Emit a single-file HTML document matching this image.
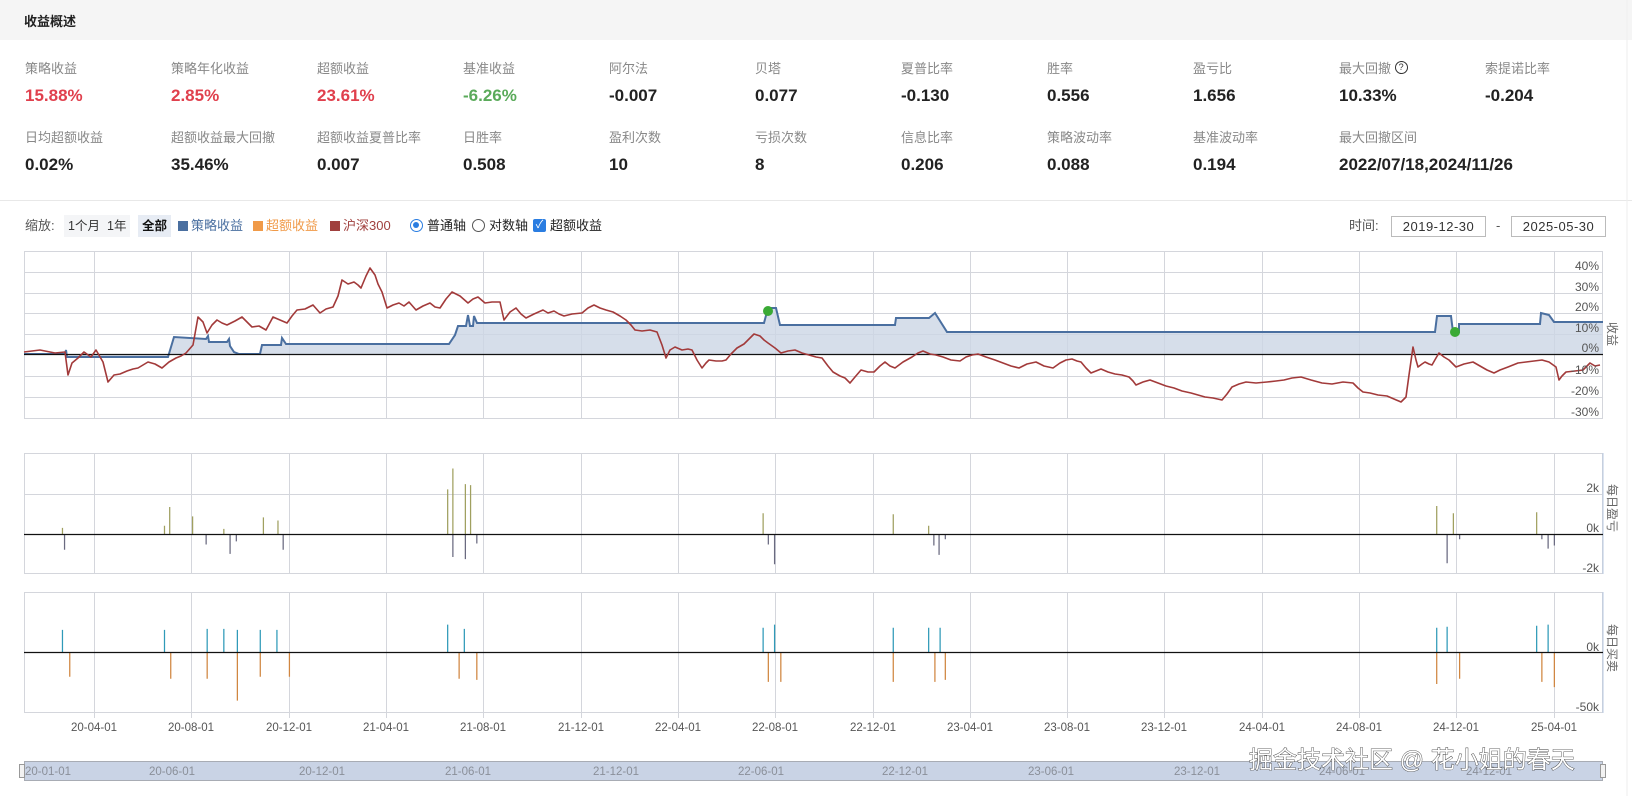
<!DOCTYPE html>
<html><head><meta charset="utf-8">
<style>
*{margin:0;padding:0;box-sizing:border-box}
body{width:1632px;height:796px;background:#fff;font-family:"Liberation Sans","Noto Sans CJK SC",sans-serif;position:relative;overflow:hidden;color:#222}
.hdr{position:absolute;left:0;top:0;width:1632px;height:40px;background:#f5f5f5}
.hdr span{position:absolute;left:24px;top:11px;font-size:13px;font-weight:bold;color:#222}
.st{position:absolute;width:146px}
.st .l{font-size:13px;color:#888;line-height:16px;height:16px;white-space:nowrap}
.st .v{font-size:17px;font-weight:bold;color:#222;line-height:20px;margin-top:9px}
.red{color:#e0404d!important}.grn{color:#5aaa5a!important}
.sep{position:absolute;left:0;top:200px;width:1632px;height:1px;background:#e8e8e8}
.tb{position:absolute;top:217px;font-size:13px;line-height:18px;color:#555}
.btn{position:absolute;top:215px;height:22px;line-height:22px;font-size:12.5px;padding:0 4px;background:#f4f5f7;color:#333}
.sq{position:absolute;top:221px;width:10px;height:10px}
.dbox{position:absolute;top:216px;width:95px;height:21px;border:1px solid #bbb;font-size:13px;line-height:19px;text-align:center;color:#333;letter-spacing:0.5px}
svg{position:absolute;left:0;top:0}
</style></head><body>
<div class="hdr"><span>收益概述</span></div>

<div class="st" style="left:25px;top:61px"><div class="l">策略收益</div><div class="v red">15.88%</div></div>
<div class="st" style="left:171px;top:61px"><div class="l">策略年化收益</div><div class="v red">2.85%</div></div>
<div class="st" style="left:317px;top:61px"><div class="l">超额收益</div><div class="v red">23.61%</div></div>
<div class="st" style="left:463px;top:61px"><div class="l">基准收益</div><div class="v grn">-6.26%</div></div>
<div class="st" style="left:609px;top:61px"><div class="l">阿尔法</div><div class="v">-0.007</div></div>
<div class="st" style="left:755px;top:61px"><div class="l">贝塔</div><div class="v">0.077</div></div>
<div class="st" style="left:901px;top:61px"><div class="l">夏普比率</div><div class="v">-0.130</div></div>
<div class="st" style="left:1047px;top:61px"><div class="l">胜率</div><div class="v">0.556</div></div>
<div class="st" style="left:1193px;top:61px"><div class="l">盈亏比</div><div class="v">1.656</div></div>
<div class="st" style="left:1339px;top:61px"><div class="l">最大回撤 <span style="display:inline-block;width:13px;height:13px;border:1.3px solid #333;border-radius:50%;font-size:9px;line-height:10px;text-align:center;color:#333;vertical-align:top">?</span></div><div class="v">10.33%</div></div>
<div class="st" style="left:1485px;top:61px"><div class="l">索提诺比率</div><div class="v">-0.204</div></div>

<div class="st" style="left:25px;top:130px"><div class="l">日均超额收益</div><div class="v">0.02%</div></div>
<div class="st" style="left:171px;top:130px"><div class="l">超额收益最大回撤</div><div class="v">35.46%</div></div>
<div class="st" style="left:317px;top:130px"><div class="l">超额收益夏普比率</div><div class="v">0.007</div></div>
<div class="st" style="left:463px;top:130px"><div class="l">日胜率</div><div class="v">0.508</div></div>
<div class="st" style="left:609px;top:130px"><div class="l">盈利次数</div><div class="v">10</div></div>
<div class="st" style="left:755px;top:130px"><div class="l">亏损次数</div><div class="v">8</div></div>
<div class="st" style="left:901px;top:130px"><div class="l">信息比率</div><div class="v">0.206</div></div>
<div class="st" style="left:1047px;top:130px"><div class="l">策略波动率</div><div class="v">0.088</div></div>
<div class="st" style="left:1193px;top:130px"><div class="l">基准波动率</div><div class="v">0.194</div></div>
<div class="st" style="left:1339px;top:130px;width:260px"><div class="l">最大回撤区间</div><div class="v">2022/07/18,2024/11/26</div></div>

<div class="sep"></div>

<div class="tb" style="left:25px">缩放:</div>
<div class="btn" style="left:64px">1个月</div>
<div class="btn" style="left:103px">1年</div>
<div class="btn" style="left:138px;background:#e7ecf4;color:#111;font-weight:bold">全部</div>
<div class="sq" style="left:178px;background:#4a6fa0"></div><div class="tb" style="left:191px;color:#4a6fa0">策略收益</div>
<div class="sq" style="left:253px;background:#f09a48"></div><div class="tb" style="left:266px;color:#f09a48">超额收益</div>
<div class="sq" style="left:330px;background:#a0403e"></div><div class="tb" style="left:343px;color:#a0403e">沪深300</div>
<div style="position:absolute;left:410px;top:219px;width:13px;height:13px;border:1.5px solid #2a7de1;border-radius:50%"><div style="margin:2px;width:6px;height:6px;border-radius:50%;background:#2a7de1"></div></div>
<div class="tb" style="left:427px;color:#222">普通轴</div>
<div style="position:absolute;left:472px;top:219px;width:13px;height:13px;border:1px solid #555;border-radius:50%"></div>
<div class="tb" style="left:489px;color:#222">对数轴</div>
<div style="position:absolute;left:533px;top:219px;width:13px;height:13px;background:#2a7de1;border-radius:2px;color:#fff;font-size:11px;line-height:13px;text-align:center">✓</div>
<div class="tb" style="left:550px;color:#222">超额收益</div>

<div class="tb" style="left:1349px;color:#555">时间:</div>
<div class="dbox" style="left:1391px">2019-12-30</div>
<div class="tb" style="left:1496px">-</div>
<div class="dbox" style="left:1511px">2025-05-30</div>

<svg width="1632" height="796" viewBox="0 0 1632 796" font-family="Liberation Sans, Noto Sans CJK SC, sans-serif">
<line x1="1627" y1="0" x2="1627" y2="796" stroke="#eee"/>
<g stroke="#d4d6dc" stroke-width="1" fill="none">
 <rect x="24.5" y="251.5" width="1578" height="167"/>
 <line x1="24" y1="272.5" x2="1603" y2="272.5"/><line x1="24" y1="293.5" x2="1603" y2="293.5"/>
 <line x1="24" y1="313.5" x2="1603" y2="313.5"/><line x1="24" y1="334.5" x2="1603" y2="334.5"/>
 <line x1="24" y1="376.5" x2="1603" y2="376.5"/><line x1="24" y1="397.5" x2="1603" y2="397.5"/>
 <rect x="24.5" y="453.5" width="1578" height="120"/>
 <line x1="24" y1="494.5" x2="1603" y2="494.5"/>
 <rect x="24.5" y="592.5" width="1578" height="120"/>
 <path d="M94.5 251V418M191.5 251V418M289.5 251V418M386.5 251V418M483.5 251V418M581.5 251V418M678.5 251V418M775.5 251V418M873.5 251V418M970.5 251V418M1067.5 251V418M1164.5 251V418M1262.5 251V418M1359.5 251V418M1456.5 251V418M1554.5 251V418"/>
 <path d="M94.5 453V574M191.5 453V574M289.5 453V574M386.5 453V574M483.5 453V574M581.5 453V574M678.5 453V574M775.5 453V574M873.5 453V574M970.5 453V574M1067.5 453V574M1164.5 453V574M1262.5 453V574M1359.5 453V574M1456.5 453V574M1554.5 453V574"/>
 <path d="M94.5 592V718M191.5 592V718M289.5 592V718M386.5 592V718M483.5 592V718M581.5 592V718M678.5 592V718M775.5 592V718M873.5 592V718M970.5 592V718M1067.5 592V718M1164.5 592V718M1262.5 592V718M1359.5 592V718M1456.5 592V718M1554.5 592V718"/>
</g>
<line x1="1603" y1="453" x2="1603" y2="574" stroke="#b8c8e0"/>
<line x1="1603" y1="592" x2="1603" y2="713" stroke="#b8c8e0"/>
<path d="M24 354 L65 354 L66 350 L67 357 L168 357 L174 337 L206 339 L208 336 L209 342 L227 342 L229 339 L230 346 L234 352 L239 354 L260 354 L262 345 L281 345 L282 338 L286 344 L449 344 L455 335 L458 326 L466 326 L468 315 L470 326 L473 326 L474 316 L477 323 L764 323 L768 308 L776 308 L780 325 L895 325 L896 318 L929 318 L935 313 L947 332 L1435 332 L1437 316 L1451 316 L1453 332 L1459 332 L1459 324 L1540 324 L1541 313 L1549 315 L1554 322 L1603 322 L1603 354 Z" fill="#ccd6e5" fill-opacity="0.8"/>
<path d="M24 354 L65 354 L66 350 L67 357 L168 357 L174 337 L206 339 L208 336 L209 342 L227 342 L229 339 L230 346 L234 352 L239 354 L260 354 L262 345 L281 345 L282 338 L286 344 L449 344 L455 335 L458 326 L466 326 L468 315 L470 326 L473 326 L474 316 L477 323 L764 323 L768 308 L776 308 L780 325 L895 325 L896 318 L929 318 L935 313 L947 332 L1435 332 L1437 316 L1451 316 L1453 332 L1459 332 L1459 324 L1540 324 L1541 313 L1549 315 L1554 322 L1603 322" fill="none" stroke="#4a6fa0" stroke-width="2"/>
<line x1="24" y1="354.5" x2="1603" y2="354.5" stroke="#111" stroke-width="1.3"/>
<path d="M24 352 L40 350 L55 353 L65 352 L68 375 L72 363 L78 358 L84 352 L91 357 L96 350 L103 362 L108 382 L114 375 L120 374 L127 371 L133 369 L138 368 L143 365 L148 362 L155 364 L162 368 L169 362 L176 358 L181 356 L186 353 L193 345 L198 317 L201 320 L203 322 L207 333 L212 325 L217 320 L222 323 L227 325 L235 321 L242 317 L247 322 L252 327 L259 326 L266 330 L273 317 L280 320 L287 323 L292 316 L297 310 L305 309 L313 305 L320 313 L326 309 L333 307 L338 296 L342 280 L348 284 L354 282 L358 285 L361 288 L366 276 L370 268 L375 275 L378 284 L382 292 L387 308 L393 305 L399 303 L404 306 L409 302 L416 310 L423 306 L430 303 L435 307 L440 308 L446 299 L452 292 L460 296 L468 303 L473 299 L478 297 L485 303 L492 302 L500 302 L504 320 L510 312 L516 308 L521 314 L526 318 L534 314 L543 310 L548 313 L554 311 L559 314 L564 316 L572 314 L582 313 L588 308 L594 305 L600 308 L606 310 L613 312 L620 316 L626 320 L631 325 L635 330 L642 331 L650 330 L657 332 L662 345 L666 358 L670 350 L675 347 L682 350 L688 349 L692 350 L697 360 L702 368 L706 363 L709 360 L716 361 L722 361 L726 360 L731 354 L737 348 L744 344 L750 338 L754 334 L760 336 L764 340 L768 343 L775 348 L781 353 L788 351 L795 350 L802 353 L809 355 L816 357 L822 358 L828 366 L833 372 L840 376 L845 378 L850 383 L855 377 L861 370 L868 372 L874 372 L880 366 L885 362 L890 366 L895 368 L903 362 L912 357 L918 353 L923 351 L930 354 L936 355 L943 357 L951 360 L960 361 L966 357 L972 355 L978 354 L986 357 L995 360 L1003 363 L1011 366 L1019 368 L1027 364 L1036 362 L1044 366 L1053 368 L1060 363 L1066 360 L1072 359 L1077 361 L1081 362 L1086 368 L1091 373 L1096 371 L1101 369 L1108 372 L1115 374 L1122 375 L1129 377 L1133 381 L1136 385 L1143 382 L1150 380 L1158 383 L1166 386 L1174 388 L1182 391 L1191 393 L1198 395 L1205 397 L1213 398 L1222 400 L1227 394 L1232 387 L1239 384 L1246 382 L1256 383 L1267 382 L1276 381 L1284 380 L1292 378 L1301 377 L1311 380 L1322 383 L1332 384 L1343 382 L1353 383 L1358 388 L1363 392 L1370 393 L1378 395 L1387 396 L1394 399 L1401 402 L1406 397 L1409 375 L1413 347 L1416 360 L1418 367 L1422 364 L1425 362 L1429 364 L1432 365 L1436 358 L1439 353 L1444 357 L1449 360 L1453 364 L1456 367 L1464 364 L1473 362 L1480 366 L1487 370 L1494 373 L1500 370 L1508 367 L1518 363 L1526 362 L1534 361 L1542 360 L1549 362 L1556 367 L1559 380 L1562 376 L1566 372 L1575 371 L1583 370 L1587 366 L1590 363 L1595 366 L1600 365" fill="none" stroke="#a23a3a" stroke-width="1.6" stroke-linejoin="round"/>
<circle cx="768" cy="311" r="5" fill="#3aaa35"/>
<circle cx="1455" cy="332" r="5" fill="#3aaa35"/>
<g font-size="12" fill="#555" text-anchor="end">
 <text x="1599" y="270">40%</text><text x="1599" y="291">30%</text><text x="1599" y="311">20%</text>
 <text x="1599" y="332">10%</text><text x="1599" y="352">0%</text><text x="1599" y="374">-10%</text>
 <text x="1599" y="395">-20%</text><text x="1599" y="416">-30%</text>
 <text x="1599" y="492">2k</text><text x="1599" y="532">0k</text><text x="1599" y="572">-2k</text>
 <text x="1599" y="651">0k</text><text x="1599" y="711">-50k</text>
</g>
<g font-size="12" fill="#666" text-anchor="middle">
 <text transform="translate(1608,334) rotate(90)">收益</text>
 <text transform="translate(1608,508) rotate(90)">每日盈亏</text>
 <text transform="translate(1608,648) rotate(90)">每日买卖</text>
</g>
<g transform="scale(1.0411)" stroke-width="1.2">
 <g stroke="#a0a060">
  <path d="M60 513V507M158 513V505M163 513V487M185 513V496M215 513V508M253 513V497M267 513V500M430 513V470M435 513V450M447 513V465M452 513V466M733 513V493M858 513V494M892 513V505M1380 513V486M1396 513V493M1476 513V492"/>
 </g>
 <g stroke="#6a6a80">
  <path d="M62 513V528M198 513V523M221 513V532M227 513V520M272 513V528M435 513V535M447 513V537M458 513V522M738 513V523M744 513V542M897 513V524M902 513V533M908 513V518M1390 513V541M1402 513V518M1481 513V518M1487 513V527M1493 513V524"/>
 </g>
 <g stroke="#2f9ab8">
  <path d="M60 627V605M158 627V605M199 627V604M215 627V604M228 627V605M250 627V605M266 627V605M430 627V600M446 627V604M733 627V603M744 627V600M858 627V603M892 627V603M903 627V603M1380 627V603M1390 627V602M1476 627V601M1487 627V600"/>
 </g>
 <g stroke="#d08640">
  <path d="M67 627V650M164 627V652M199 627V652M228 627V673M250 627V650M278 627V650M441 627V652M458 627V653M738 627V655M750 627V655M858 627V655M898 627V655M908 627V653M1380 627V657M1402 627V652M1481 627V655M1493 627V660"/>
 </g>
</g>
<line x1="24" y1="534.5" x2="1603" y2="534.5" stroke="#111" stroke-width="1.3"/>
<line x1="24" y1="652.5" x2="1603" y2="652.5" stroke="#111" stroke-width="1.3"/>
<g font-size="11.5" fill="#555" text-anchor="middle">
 <text x="94" y="731">20-04-01</text><text x="191" y="731">20-08-01</text><text x="289" y="731">20-12-01</text>
 <text x="386" y="731">21-04-01</text><text x="483" y="731">21-08-01</text><text x="581" y="731">21-12-01</text>
 <text x="678" y="731">22-04-01</text><text x="775" y="731">22-08-01</text><text x="873" y="731">22-12-01</text>
 <text x="970" y="731">23-04-01</text><text x="1067" y="731">23-08-01</text><text x="1164" y="731">23-12-01</text>
 <text x="1262" y="731">24-04-01</text><text x="1359" y="731">24-08-01</text><text x="1456" y="731">24-12-01</text>
 <text x="1554" y="731">25-04-01</text>
</g>
<rect x="24.5" y="761.5" width="1578" height="19" fill="#c9d3e5" stroke="#a8acb4"/>
<rect x="19.5" y="764.5" width="5" height="13" fill="#f2f2f2" stroke="#999"/>
<rect x="1600.5" y="764.5" width="5" height="13" fill="#f2f2f2" stroke="#999"/>
<g font-size="11.5" fill="#8a8f99" text-anchor="middle">
 <text x="48" y="775">20-01-01</text><text x="172" y="775">20-06-01</text><text x="322" y="775">20-12-01</text>
 <text x="468" y="775">21-06-01</text><text x="616" y="775">21-12-01</text><text x="761" y="775">22-06-01</text>
 <text x="905" y="775">22-12-01</text><text x="1051" y="775">23-06-01</text><text x="1197" y="775">23-12-01</text>
 <text x="1342" y="775">24-06-01</text><text x="1489" y="775">24-12-01</text>
</g>
<text x="1249" y="768" font-size="24" fill="#fff" stroke="#333" stroke-width="0.8" paint-order="stroke">掘金技术社区 @ 花小姐的春天</text>
</svg>
</body></html>
